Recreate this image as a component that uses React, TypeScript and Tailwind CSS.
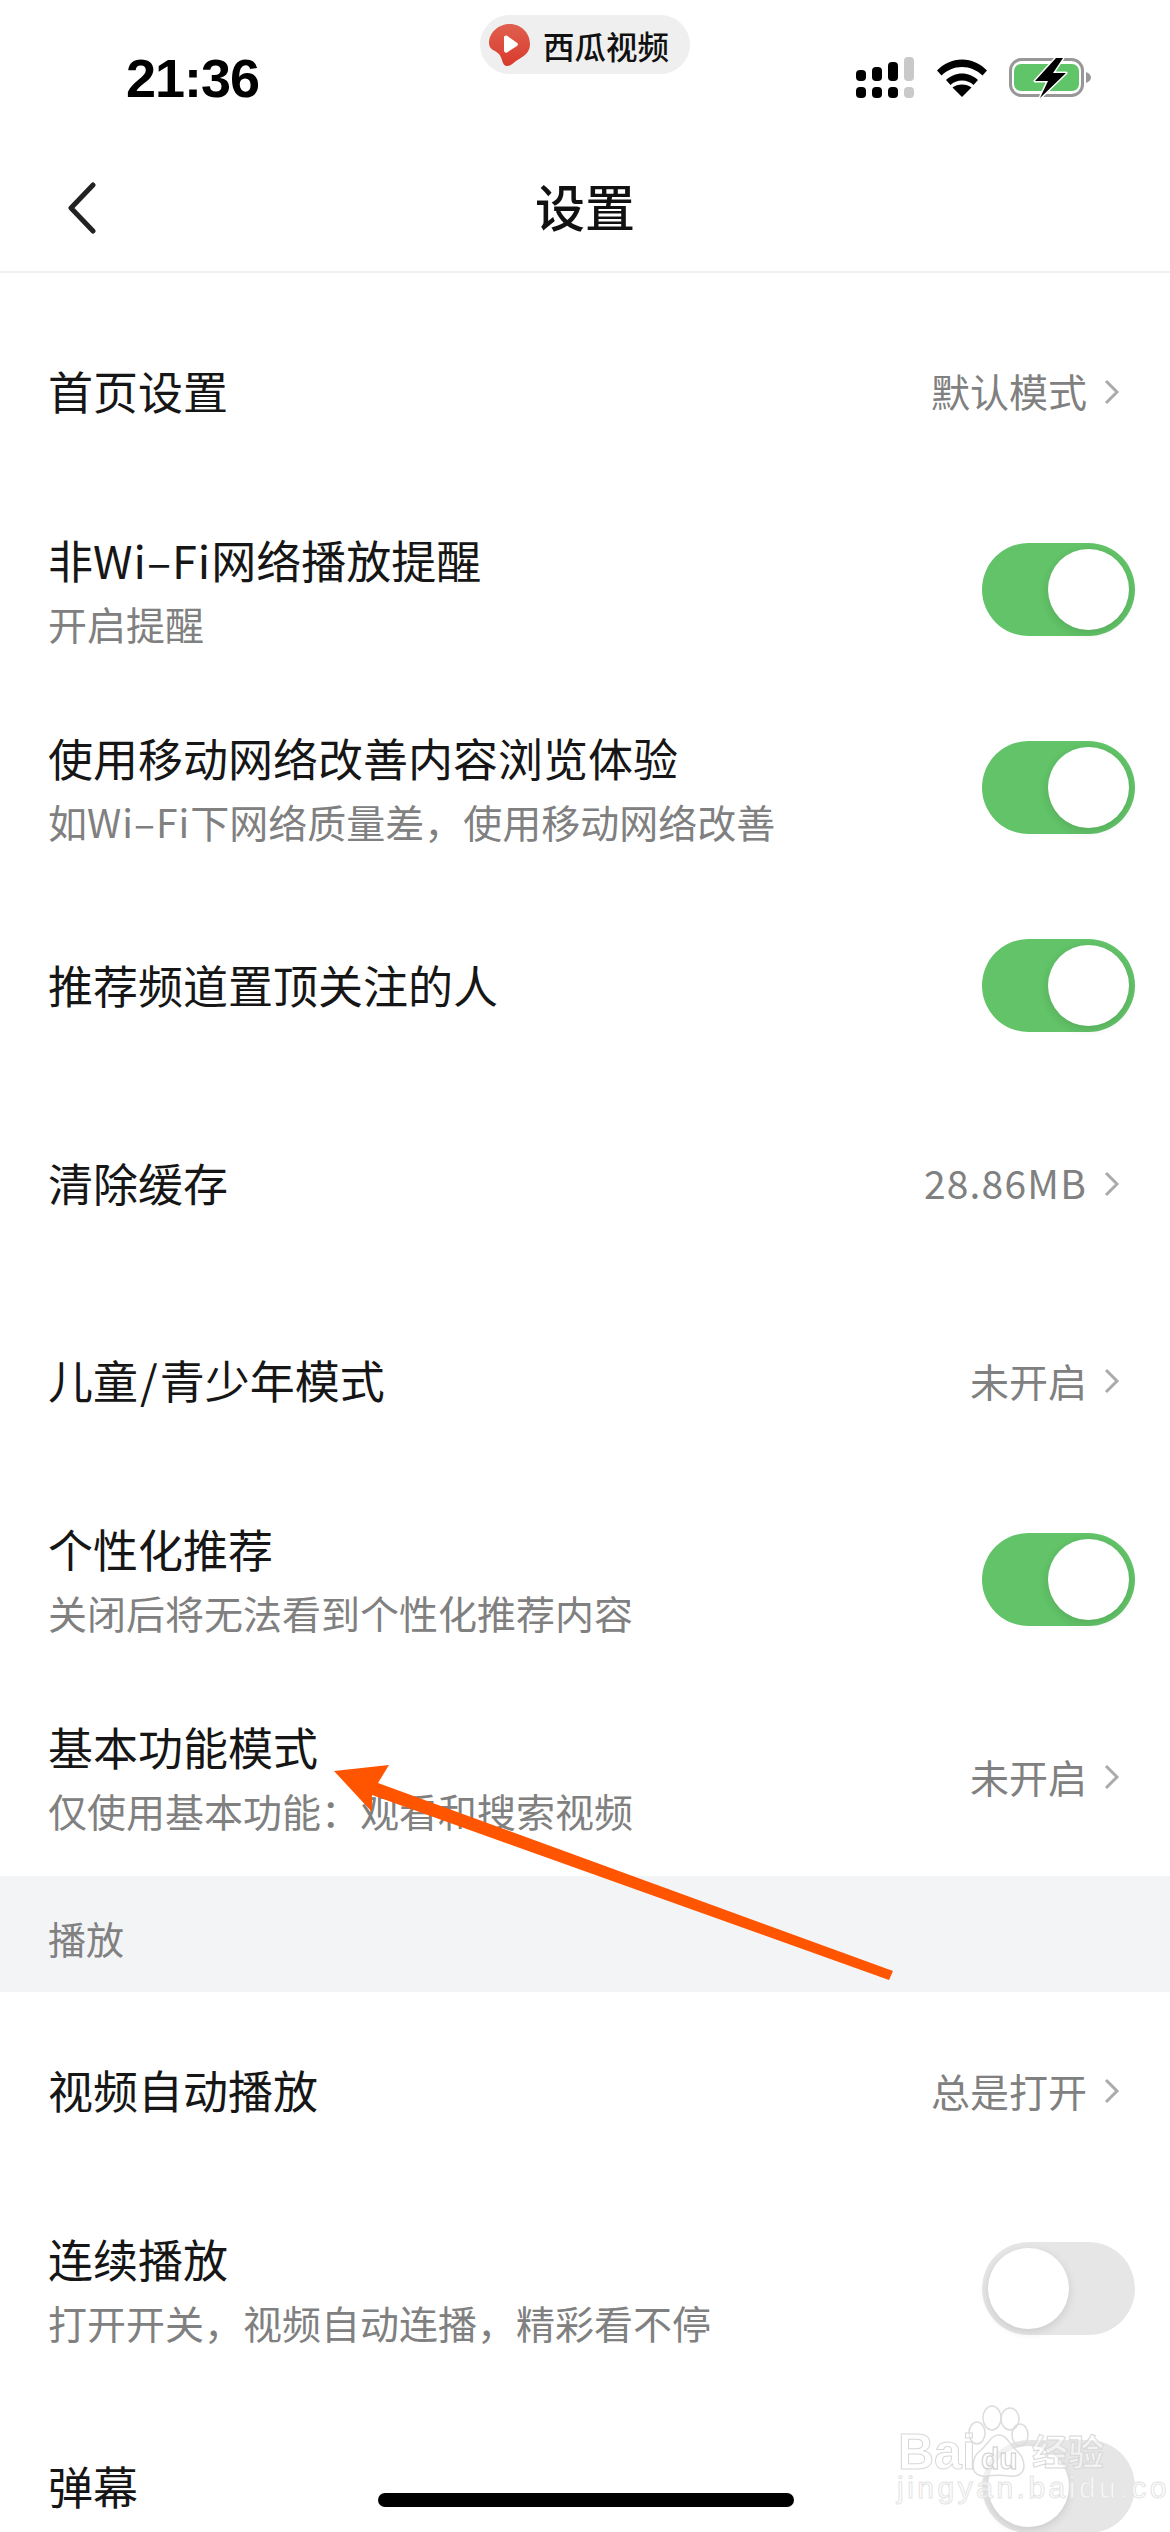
import React from 'react';

const FONT = "font-['Noto_Sans_CJK_SC','Noto_Sans',sans-serif]";

const Toggle: React.FC<{ on?: boolean }> = ({ on = false }) => (
  <div
    className={
      on
        ? 'flex h-[93px] w-[153px] shrink-0 items-center justify-end rounded-full bg-[#62c368] pr-[6px]'
        : 'flex h-[93px] w-[153px] shrink-0 items-center justify-start rounded-full bg-[#e6e6e6] pl-[6px]'
    }
  >
    <div className="h-[81px] w-[81px] rounded-full bg-white shadow-[0_3px_10px_rgba(0,0,0,0.12)]" />
  </div>
);

const Chevron = () => (
  <svg width="16" height="26" viewBox="0 0 16 26" fill="none" className="ml-[17px] mr-[15px] shrink-0">
    <path d="M2 2l11 11L2 24" stroke="#ababab" strokeWidth="3" />
  </svg>
);

interface RowProps {
  title: React.ReactNode;
  sub?: React.ReactNode;
  value?: React.ReactNode;
  toggle?: boolean;
}

const Row: React.FC<RowProps> = ({ title, sub, value, toggle }) => (
  <div className="flex h-[197.9px] items-center justify-between pl-[48px] pr-[35px]">
    <div>
      <div className={sub ? 'text-[45px] leading-[56px] text-[#161616]' : '-mt-[2px] text-[45px] leading-[56px] text-[#161616]'}>{title}</div>
      {sub && <div className="mt-[10px] text-[39px] leading-[50px] text-[#808080]">{sub}</div>}
    </div>
    {value !== undefined && (
      <div className="flex items-center">
        <span className="-mt-[3px] text-[39px] leading-[50px] text-[#808080]">{value}</span>
        <Chevron />
      </div>
    )}
    {toggle !== undefined && <Toggle on={toggle} />}
  </div>
);

const StatusIcons = () => (
  <svg width="235" height="41" viewBox="856 57 235 41" className="shrink-0">
    <rect x="856" y="70" width="10" height="11" rx="4" fill="#000" />
    <rect x="872" y="67" width="10" height="14" rx="4" fill="#000" />
    <rect x="888" y="62" width="10" height="19" rx="4" fill="#000" />
    <rect x="904" y="57" width="10" height="24" rx="4" fill="#c9c9c9" />
    <rect x="856" y="87" width="10" height="11" rx="4" fill="#000" />
    <rect x="872" y="87" width="10" height="11" rx="4" fill="#000" />
    <rect x="888" y="87" width="10" height="11" rx="4" fill="#000" />
    <rect x="904" y="87" width="10" height="11" rx="4" fill="#c9c9c9" />
    <path d="M937 70.500C944 63.500 952 59.500 962 59.500s18 4 25 11l-4.500 5C976.500 70 970 67 962 67s-14.500 3-20.500 8.500z" fill="#000" />
    <path d="M946 80c4.500-4 10-6.500 16-6.500s11.500 2.500 16 6.500l-4.500 5c-3-2.800-7-4.500-11.500-4.500s-8.500 1.700-11.500 4.500z" fill="#000" />
    <path d="M952.500 87.500c2.500-2 6-3 9.500-3s7 1 9.500 3L962 97z" fill="#000" />
    <rect x="1010.500" y="59.500" width="72" height="36" rx="11" fill="#fff" stroke="#979797" strokeWidth="3" />
    <rect x="1014" y="64" width="65" height="27" rx="7" fill="#5fc568" />
    <path d="M1086 72c3 1 5 3 5 5.500s-2 4.500-5 5.500z" fill="#979797" />
    <path d="M1056 58l-21 23h13l-8 17 26-25h-13l10-15z" fill="#000" stroke="#fff" strokeWidth="3" paintOrder="stroke" strokeLinejoin="round" />
  </svg>
);

const XiguaLogo = () => (
  <svg width="41" height="42" viewBox="0 0 41 42" className="shrink-0">
    <defs>
      <linearGradient id="xg" x1="0" y1="0" x2="0" y2="1">
        <stop offset="0" stopColor="#e0604f" />
        <stop offset="1" stopColor="#d83a2c" />
      </linearGradient>
    </defs>
    <path d="M21 0C32 0 41 9 41 20C41 30 33 33 27 37C24 39 22 42 18 42C13 42 14 35 10 30C6 26 0 26 0 19C0 8 10 0 21 0Z" fill="url(#xg)" />
    <path d="M15 13.500c0-1.500 1.500-2.500 3-1.800l10 7c1.300.8 1.300 2.400 0 3.200l-10 6.500c-1.500.8-3-.2-3-1.800z" fill="#fff" />
  </svg>
);

const Watermark = () => (
  <div className="absolute left-[895px] top-[2405px] h-[105px] w-[215px]">
    <svg width="215" height="105" viewBox="0 0 215 105" fill="none" className="absolute inset-0" stroke="#dcdcdc" strokeWidth="1.500">
      <ellipse cx="97" cy="13" rx="9" ry="12" />
      <ellipse cx="115" cy="14" rx="9" ry="11" />
      <ellipse cx="82" cy="28" rx="8" ry="11" />
      <ellipse cx="125" cy="30" rx="8" ry="11" />
      <path d="M104 30c-8 0-11 9-18 15-7 5-8 11-8 16 0 8 7 11 14 10 8-1 15-1 23 0 7 1 14-2 14-10 0-5-2-11-8-16-7-6-9-15-17-15z" fill="#fff" fillOpacity="0.5" />
    </svg>
    <span className="absolute left-[3px] top-[18px] text-[50px] font-bold leading-[58px] text-white/50 [-webkit-text-stroke:1px_#d8d8d8] font-['Liberation_Sans',sans-serif]">Bai</span>
    <span className="absolute left-[86px] top-[36px] text-[30px] font-bold leading-[36px] text-white/50 [-webkit-text-stroke:1px_#cccccc] font-['Liberation_Sans',sans-serif]">du</span>
    <span className="absolute left-[137px] top-[22px] text-[36px] font-bold leading-[46px] text-white/50 [-webkit-text-stroke:1px_#d8d8d8]">经验</span>
    <span className="absolute left-[2px] top-[65px] text-[30px] leading-[36px] tracking-[3.500px] text-white/80 [-webkit-text-stroke:1px_#e4e4e4] font-['Liberation_Sans',sans-serif]">jingyan.baidu.com</span>
  </div>
);

export default function App() {
  return (
    <div className={`relative h-[2532px] w-[1170px] overflow-hidden bg-white ${FONT}`}>
      {/* status bar */}
      <div className="flex h-[141px] items-start justify-between pl-[126px] pr-[79px] pt-[51px]">
        <div className="text-[54px] font-bold leading-[54px] tracking-[-1px] text-black font-['Liberation_Sans',sans-serif]">21:36</div>
        <div className="mt-[6px]">
          <StatusIcons />
        </div>
      </div>

      {/* app pill */}
      <div className="absolute left-[480px] top-[15px] flex h-[59px] w-[210px] items-center rounded-full bg-[#efefef] pl-[9px]">
        <XiguaLogo />
        <span className="ml-[13px] text-[31.500px] font-medium leading-[40px] text-[#111]">西瓜视频</span>
      </div>

      {/* nav */}
      <div className="relative flex h-[132px] items-center justify-center border-b-2 border-[#efefef]">
        <svg width="32" height="52" viewBox="0 0 32 52" fill="none" className="absolute left-[66px] top-[41px]">
          <path d="M27 3L5 26l22 23" stroke="#222" strokeWidth="5" strokeLinecap="round" strokeLinejoin="round" />
        </svg>
        <div className="-mt-[2px] text-[50px] font-medium leading-[60px] text-[#111]">设置</div>
      </div>

      <div className="pt-[20px]">
        <Row title="首页设置" value="默认模式" />
        <Row title={<>非<span className="tracking-[1px]">Wi–Fi</span>网络播放提醒</>} sub="开启提醒" toggle />
        <Row title="使用移动网络改善内容浏览体验" sub={<>如<span className="tracking-[1px]">Wi–Fi</span>下网络质量差，使用移动网络改善</>} toggle />
        <Row title="推荐频道置顶关注的人" toggle />
        <Row title="清除缓存" value={<span className="tracking-[1.200px]">28.86MB</span>} />
        <Row title={<>儿童<span className="mx-[2px]">/</span>青少年模式</>} value="未开启" />
        <Row title="个性化推荐" sub="关闭后将无法看到个性化推荐内容" toggle />
        <Row title="基本功能模式" sub="仅使用基本功能：观看和搜索视频" value="未开启" />
      </div>

      <div className="flex h-[116px] items-center bg-[#f3f4f6] pl-[48px] pt-[6px] text-[38px] text-[#808080]">播放</div>

      <Row title="视频自动播放" value="总是打开" />
      <Row title="连续播放" sub="打开开关，视频自动连播，精彩看不停" toggle={false} />
      <Row title="弹幕" toggle={false} />

      {/* annotation arrow */}
      <svg width="1170" height="2532" viewBox="0 0 1170 2532" className="pointer-events-none absolute left-0 top-0">
        <polygon points="334,1771 389,1765 378,1783 893,1971 889,1980 372,1795 372,1812" fill="#ff5500" />
      </svg>

      <Watermark />

      {/* home indicator */}
      <div className="absolute left-[378px] top-[2493px] h-[14px] w-[416px] rounded-full bg-black" />
    </div>
  );
}
